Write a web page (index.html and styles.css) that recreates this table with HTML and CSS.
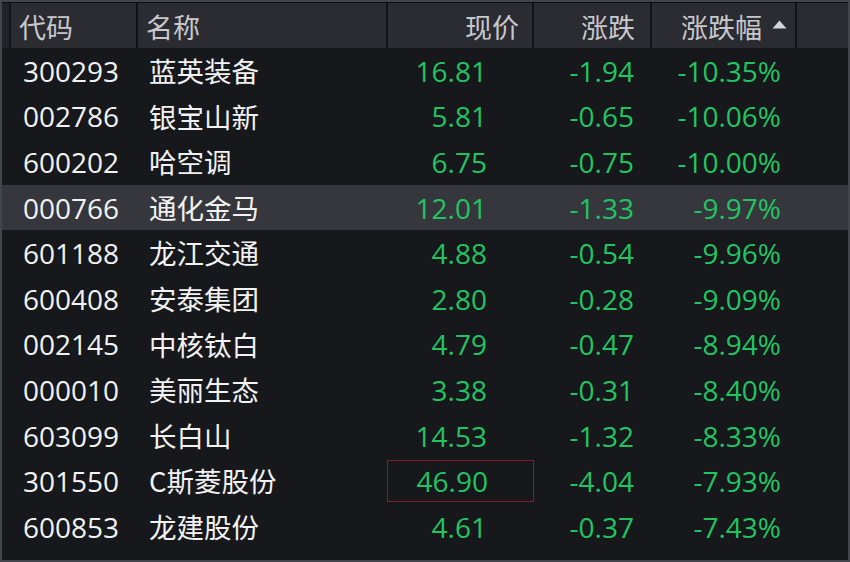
FILE: index.html
```html
<!DOCTYPE html>
<html lang="zh-CN">
<head>
<meta charset="utf-8">
<title>跌幅榜</title>
<link rel="stylesheet" href="styles.css">
</head>
<body>
<div class="board">
  <div class="head">
    <div class="hc gut"></div>
    <div class="hc l code">代码</div>
    <div class="hc l name">名称</div>
    <div class="hc r price">现价</div>
    <div class="hc r chg">涨跌</div>
    <div class="hc r pct">涨跌幅<svg class="sort" width="15" height="9" viewBox="0 0 15 9"><path d="M7.5 0.5 L14.5 8.5 L0.5 8.5 Z" fill="#d4d4d8"/></svg></div>
    <div class="hc end"></div>
  </div>
  <div class="rows">
    <div class="row"><span class="gut"></span><span class="code">300293</span><span class="name">蓝英装备</span><span class="price">16.81</span><span class="chg">-1.94</span><span class="pct">-10.35%</span><span></span></div>
    <div class="row"><span class="gut"></span><span class="code">002786</span><span class="name">银宝山新</span><span class="price">5.81</span><span class="chg">-0.65</span><span class="pct">-10.06%</span><span></span></div>
    <div class="row"><span class="gut"></span><span class="code">600202</span><span class="name">哈空调</span><span class="price">6.75</span><span class="chg">-0.75</span><span class="pct">-10.00%</span><span></span></div>
    <div class="row sel"><span class="gut"></span><span class="code">000766</span><span class="name">通化金马</span><span class="price">12.01</span><span class="chg">-1.33</span><span class="pct">-9.97%</span><span></span></div>
    <div class="row"><span class="gut"></span><span class="code">601188</span><span class="name">龙江交通</span><span class="price">4.88</span><span class="chg">-0.54</span><span class="pct">-9.96%</span><span></span></div>
    <div class="row"><span class="gut"></span><span class="code">600408</span><span class="name">安泰集团</span><span class="price">2.80</span><span class="chg">-0.28</span><span class="pct">-9.09%</span><span></span></div>
    <div class="row"><span class="gut"></span><span class="code">002145</span><span class="name">中核钛白</span><span class="price">4.79</span><span class="chg">-0.47</span><span class="pct">-8.94%</span><span></span></div>
    <div class="row"><span class="gut"></span><span class="code">000010</span><span class="name">美丽生态</span><span class="price">3.38</span><span class="chg">-0.31</span><span class="pct">-8.40%</span><span></span></div>
    <div class="row"><span class="gut"></span><span class="code">603099</span><span class="name">长白山</span><span class="price">14.53</span><span class="chg">-1.32</span><span class="pct">-8.33%</span><span></span></div>
    <div class="row"><span class="gut"></span><span class="code">301550</span><span class="name">C斯菱股份</span><span class="price boxed">46.90</span><span class="chg">-4.04</span><span class="pct">-7.93%</span><span></span></div>
    <div class="row"><span class="gut"></span><span class="code">600853</span><span class="name">龙建股份</span><span class="price">4.61</span><span class="chg">-0.37</span><span class="pct">-7.43%</span><span></span></div>
  </div>
</div>
</body>
</html>
```

FILE: styles.css
```css
html, body {
  margin: 0;
  padding: 0;
  background: #17181c;
}

.board {
  box-sizing: border-box;
  width: 850px;
  height: 562px;
  border: 2px solid #44454a;
  background: #17181c;
  display: flex;
  flex-direction: column;
  font-family: "Open Sans", "Noto Sans CJK SC", sans-serif;
  font-size: 28px;
  overflow: hidden;
}

.head,
.row {
  display: grid;
  grid-template-columns: 9px 127px 250px 146px 118px 145px 1fr;
}

.head {
  height: 45px;
  border-top: 1px solid #0c0c0e;
  background: #2b2b32;
  color: #c8c8cc;
}

.hc {
  display: flex;
  align-items: center;
  border-right: 2px solid #121316;
  font-family: "Noto Sans CJK SC", sans-serif;
  font-size: 27px;
  line-height: 1;
  padding-top: 2px;
}

.hc.gut {
  background: #222329;
  width: 7px;
}

.hc.end {
  border-right: none;
}

.hc.l { justify-content: flex-start; padding-left: 8px; }
.hc.r { justify-content: flex-end; }
.hc.price { padding-right: 13px; }
.hc.chg { padding-right: 15px; }
.hc.pct { padding-right: 8px; }

.sort {
  margin-left: 10px;
  margin-bottom: 4px;
}

.rows {
  display: flex;
  flex-direction: column;
}

.row {
  height: 45.6px;
  align-items: center;
  line-height: 1;
}

.row.sel {
  background: #36373d;
}

.row .code {
  color: #f2f2f2;
  padding-left: 12px;
}

.row .name {
  color: #f2f2f2;
  padding-left: 11px;
  font-family: "Noto Sans CJK SC", sans-serif;
  font-size: 27.5px;
}

.row .price,
.row .chg,
.row .pct {
  color: #22c462;
  text-align: right;
}

.row .price { padding-right: 47px; }
.row .chg { padding-right: 18px; }
.row .pct { padding-right: 16px; }

.row .boxed {
  align-self: stretch;
  display: flex;
  align-items: center;
  justify-content: flex-end;
  margin: 2px 0 2px -1px;
  border: 1px solid #7e1f2d;
  padding-right: 45px;
}
```
